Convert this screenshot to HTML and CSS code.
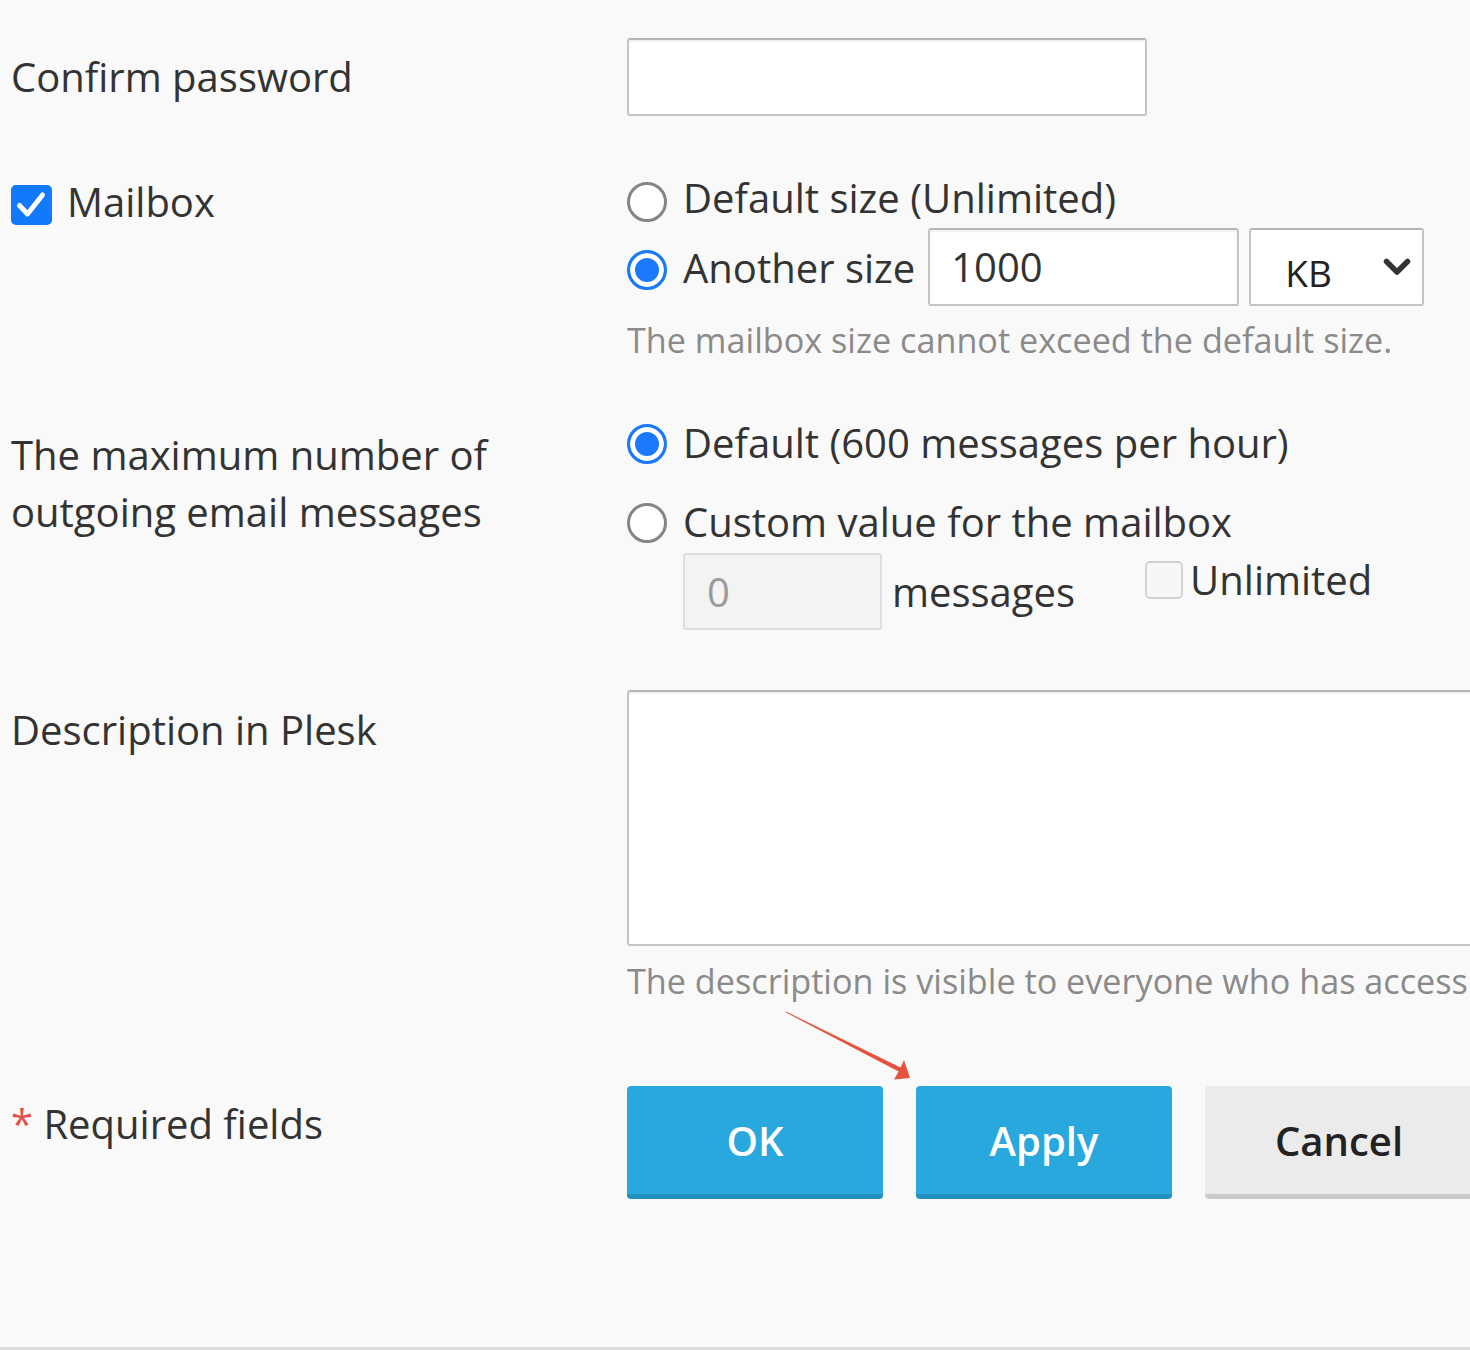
FILE: index.html
```html
<!DOCTYPE html>
<html lang="en">
<head>
<meta charset="utf-8">
<title>Mailbox settings</title>
<link rel="stylesheet" href="styles.css">
</head>
<body>
<div class="page">
  <div class="row row-confirm">
    <div class="label">Confirm password</div>
    <div class="field">
      <div class="input input-confirm"></div>
    </div>
  </div>

  <div class="row row-mailbox">
    <div class="label check-label">
      <span class="checkbox checked">
        <svg viewBox="0 0 40 40" width="40" height="40"><path d="M8.5 20.5 L16.5 29 L31.5 10" fill="none" stroke="#fff" stroke-width="5" stroke-linecap="round" stroke-linejoin="round"/></svg>
      </span>
      <span>Mailbox</span>
    </div>
    <div class="field">
      <div class="option"><span class="radio"></span><span>Default size (Unlimited)</span></div>
      <div class="option option-size">
        <span class="radio checked"></span><span>Another size</span>
        <div class="input input-size">1000</div>
        <div class="input select"><span class="select-value">KB</span>
          <svg viewBox="0 0 28 18" width="28" height="18"><path d="M3.5 3.5 L14 14 L24.5 3.5" fill="none" stroke="#333" stroke-width="5.5" stroke-linecap="round" stroke-linejoin="round"/></svg>
        </div>
      </div>
      <div class="hint">The mailbox size cannot exceed the default size.</div>
    </div>
  </div>

  <div class="row row-outgoing">
    <div class="label label-wrap">The maximum number of outgoing email messages</div>
    <div class="field">
      <div class="option"><span class="radio checked"></span><span>Default (600 messages per hour)</span></div>
      <div class="option option-custom"><span class="radio"></span><span>Custom value for the mailbox</span></div>
      <div class="subrow">
        <div class="input input-disabled">0</div>
        <span class="unit">messages</span>
        <div class="unlimited"><span class="checkbox empty"></span><span>Unlimited</span></div>
      </div>
    </div>
  </div>

  <div class="row row-desc">
    <div class="label">Description in Plesk</div>
    <div class="field">
      <div class="input textarea"></div>
      <div class="hint hint-desc">The description is visible to everyone who has access</div>
    </div>
  </div>

  <div class="row row-buttons">
    <div class="label"><span class="required">*</span> Required fields</div>
    <div class="field buttons">
      <button class="btn btn-primary">OK</button>
      <button class="btn btn-primary">Apply</button>
      <button class="btn btn-default">Cancel</button>
    </div>
  </div>

  <svg class="annotation" viewBox="0 0 140 80" width="140" height="80">
    <polygon points="6,6.6 120.6,62.6 124,55 130,73 114,74.5 118.6,66.6 6,7.6" fill="#e5533d"/>
  </svg>
</div>
</body>
</html>
```

FILE: styles.css
```css
html, body {
  margin: 0;
  padding: 0;
}

body {
  background: #f9f9f9;
  font-family: "Open Sans", "DejaVu Sans", sans-serif;
  font-size: 40px;
  line-height: 57px;
  color: #333;
  overflow: hidden;
}

.page {
  position: relative;
  height: 1350px;
  box-sizing: border-box;
  padding-top: 38px;
  border-bottom: 3px solid #dedede;
  overflow: hidden;
}

.row {
  display: grid;
  grid-template-columns: 616px 1fr;
  padding-left: 11px;
}

.field {
  min-width: 0;
}

.input {
  background: #fff;
  border: 2px solid #c4c4c4;
  border-top-color: #b4b4b4;
  border-radius: 3px;
  box-shadow: inset 0 2px 2px rgba(0, 0, 0, 0.06);
  box-sizing: border-box;
}

/* Row 1 */
.row-confirm .label {
  padding-top: 10px;
}

.input-confirm {
  width: 520px;
  height: 78px;
}

/* Row 2 */
.row-mailbox {
  margin-top: 53px;
}

.check-label {
  display: flex;
  align-items: flex-start;
  padding-top: 4px;
}

.checkbox {
  display: block;
  flex: none;
  box-sizing: border-box;
  border-radius: 5px;
}

.checkbox.checked {
  width: 41px;
  height: 40px;
  margin-top: 12px;
  margin-right: 15px;
  background: #1279fb;
}

.checkbox.checked svg {
  display: block;
}

.option {
  display: flex;
  align-items: flex-start;
  height: 57px;
}

.radio {
  flex: none;
  width: 40px;
  height: 40px;
  margin-top: 13px;
  margin-right: 16px;
  box-sizing: border-box;
  border-radius: 50%;
  border: 3px solid #858585;
  background: #fff;
}

.radio.checked {
  border-color: #1a7afb;
  background: #1a7afb;
  box-shadow: inset 0 0 0 5px #fff;
}

.option-size {
  margin-top: 2px;
  height: 78px;
  align-items: center;
}

.option-size .radio {
  margin-top: 6px;
}

.input-size {
  width: 311px;
  height: 78px;
  margin-left: 13px;
  padding-left: 21px;
  line-height: 74px;
}

.select {
  width: 175px;
  height: 78px;
  margin-left: 10px;
  display: flex;
  align-items: center;
  justify-content: space-between;
  padding: 0 11px 0 34px;
  box-shadow: none;
}

.select-value {
  font-size: 37px;
  margin-top: 10px;
  color: #222;
}

.select svg {
  display: block;
}

.hint {
  font-size: 34.2px;
  line-height: 46px;
  color: #8a8a8a;
  margin-top: 11px;
  white-space: nowrap;
}

/* Row 3 */
.row-outgoing {
  margin-top: 51px;
}

.label-wrap {
  max-width: 530px;
  padding-top: 12px;
}

.row-outgoing .option .radio {
  margin-top: 10px;
}

.option-custom {
  margin-top: 22px;
}

.subrow {
  display: flex;
  align-items: flex-start;
  margin-left: 56px;
  margin-top: 3px;
}

.input-disabled {
  width: 199px;
  height: 77px;
  background: #f3f3f3;
  border-color: #dedede;
  box-shadow: none;
  color: #9a9a9a;
  padding-left: 22px;
  line-height: 73px;
}

.unit {
  align-self: center;
  margin-left: 10px;
}

.unlimited {
  display: flex;
  align-items: center;
  margin-left: 70px;
  margin-top: -2px;
}

.checkbox.empty {
  width: 38px;
  height: 38px;
  margin-right: 7px;
  border: 2px solid #d2d2d2;
  background: #f6f6f6;
}

/* Row 4 */
.row-desc {
  margin-top: 60px;
}

.row-desc .label {
  padding-top: 11px;
}

.textarea {
  width: 1000px;
  height: 256px;
}

.hint-desc {
  margin-top: 12px;
}

/* Row 5 */
.row-buttons {
  margin-top: 82px;
}

.row-buttons .label {
  padding-top: 9px;
}

.required {
  color: #e0524f;
}

.buttons {
  display: flex;
  gap: 33px;
}

.btn {
  flex: none;
  min-width: 256px;
  height: 113px;
  padding: 0 70px;
  box-sizing: border-box;
  border: none;
  border-radius: 4px;
  font-family: "Open Sans", "DejaVu Sans", sans-serif;
  font-size: 40px;
  font-weight: 600;
  line-height: 57px;
}

.btn-primary {
  background: #29a8dd;
  border-bottom: 5px solid #2291bf;
  color: #fff;
}

.btn-default {
  background: #ebebeb;
  border-bottom: 5px solid #cbcbcb;
  color: #222;
}

.annotation {
  position: absolute;
  left: 780px;
  top: 1005px;
}
```
